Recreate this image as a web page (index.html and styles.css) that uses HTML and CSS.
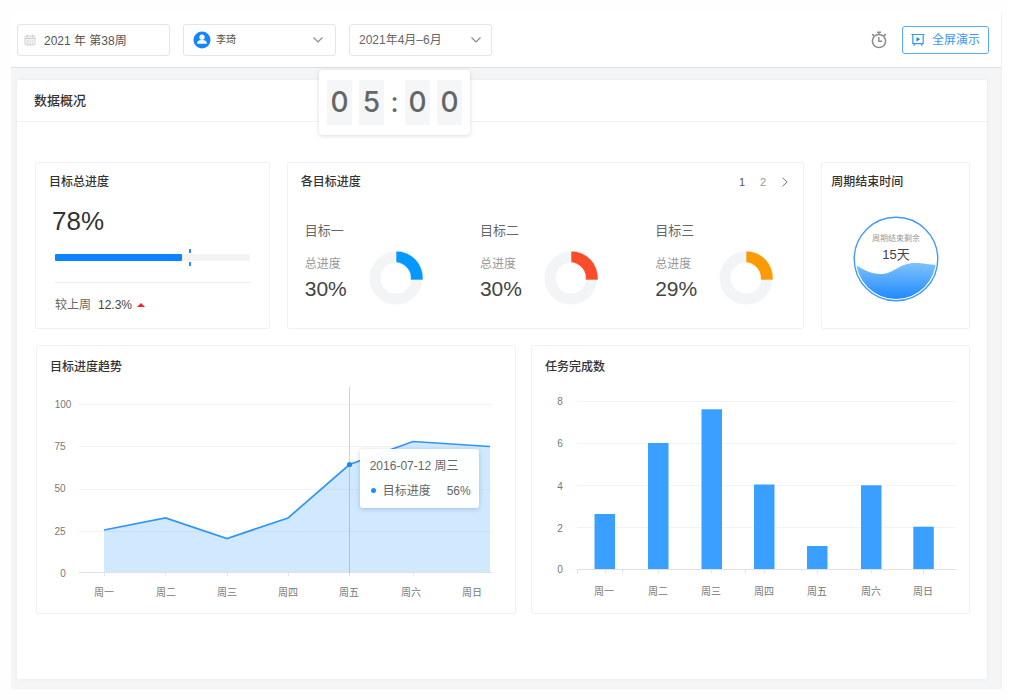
FILE: index.html
```html
<!DOCTYPE html>
<html lang="zh-CN">
<head>
<meta charset="utf-8">
<meta name="viewport" content="width=device-width, initial-scale=1">
<title>数据概况</title>
<link rel="stylesheet" href="styles.css">
</head>
<body>
<div class="app">
  <header class="toolbar">
    <label class="field field-week">
      <svg class="calendar" viewBox="0 0 12 12" width="12" height="12" fill="none" stroke="#d0d0d0" aria-hidden="true"><rect x="1" y="2" width="10" height="9" rx="1" fill="#f4f4f4"/><path d="M1 4.500h10M3.500.5v3M8.500.5v3"/><path d="M3 7h6M3 9h6" stroke-dasharray="1.500 1"/></svg>
      <input class="control" type="text" value="2021 年 第38周" aria-label="周">
    </label>
    <label class="field field-user">
      <svg viewBox="0 0 18 18" width="18" height="18" aria-hidden="true"><circle cx="9" cy="9" r="8.500" fill="#1684fc"/><circle cx="9" cy="6.200" r="2.600" fill="#fff"/><path d="M4.200 12.800V12c0-2 1.800-3 4.800-3s4.800 1 4.800 3v.8z" fill="#fff"/></svg>
      <select class="control" aria-label="成员"><option>李琦</option></select>
      <svg class="chevron" viewBox="0 0 12 8" width="12" height="8" aria-hidden="true"><path d="M1.500 1.500 6 6l4.500-4.500"/></svg>
    </label>
    <label class="field field-period">
      <select class="control" aria-label="周期"><option>2021年4月–6月</option></select>
      <svg class="chevron" viewBox="0 0 12 8" width="12" height="8" aria-hidden="true"><path d="M1.500 1.500 6 6l4.500-4.500"/></svg>
    </label>
    <div class="actions">
      <button class="timer-toggle" type="button" aria-label="计时器">
        <svg viewBox="0 0 18 18" width="18" height="18" fill="none" stroke="#8c8c8c" aria-hidden="true"><circle cx="9" cy="10" r="6.600" stroke-width="1.500"/><path d="M7 1.200h4M9 1.200v2.400M8.800 6v4.300h3.400" stroke-width="1.400"/><path d="M2.300 3.200 4 4.800M15.700 3.200 14 4.800" stroke-width="1.800"/></svg>
      </button>
      <button class="present" type="button">
        <svg viewBox="0 0 14 14" width="14" height="14" fill="none" stroke="#3b97f8" stroke-width="1.200" aria-hidden="true"><path d="M.5 1.500h13M1.800 1.500v9.200h10.400V1.500M4 10.700l-1.200 2M10 10.700l1.200 2"/><path d="M5.500 4v4.400L9.200 6.200z" fill="#1684fc" stroke="none"/></svg>
        <span>全屏演示</span>
      </button>
    </div>
    <div class="countdown" role="timer">
      <span class="digit">0</span><span class="digit">5</span><span class="colon">:</span><span class="digit">0</span><span class="digit">0</span>
    </div>
  </header>

  <main class="content">
    <section class="panel">
      <h1 class="panel-title">数据概况</h1>
      <div class="panel-body">
        <div class="row row-summary">
          <article class="card">
            <h2 class="card-title">目标总进度</h2>
            <div class="total">78%</div>
            <div class="overall">
              <div class="track"><div class="fill" style="width:65%"></div><span class="mark"></span></div>
              <p class="compare"><span>较上周</span><span class="delta">12.3%</span><span class="up"></span></p>
            </div>
          </article>

          <article class="card">
            <div class="card-head">
              <h2 class="card-title">各目标进度</h2>
              <nav class="pager" aria-label="分页">
                <a class="page current" href="#1">1</a>
                <a class="page" href="#2">2</a>
                <a class="page" href="#next" aria-label="下一页"><svg viewBox="0 0 8 10" width="8" height="10" fill="none" stroke="#777"><path d="m1.500.8 4.700 4.200-4.700 4.200"/></svg></a>
              </nav>
            </div>
            <div class="goals">
              <section class="goal">
                <h3 class="goal-name">目标一</h3>
                <div class="goal-data">
                  <div><div class="goal-label">总进度</div><div class="goal-value">30%</div></div>
                  <svg class="donut" viewBox="0 0 54 54" aria-hidden="true"><circle class="ring" cx="27" cy="27" r="21"/><path class="slice" fill="#0698ff" d="M27 0a27 27 0 0 1 27 29H41.500A15.500 15.500 0 0 0 27 11.500z"/></svg>
                </div>
              </section>
              <section class="goal">
                <h3 class="goal-name">目标二</h3>
                <div class="goal-data">
                  <div><div class="goal-label">总进度</div><div class="goal-value">30%</div></div>
                  <svg class="donut" viewBox="0 0 54 54" aria-hidden="true"><circle class="ring" cx="27" cy="27" r="21"/><path class="slice" fill="#fa4b2a" d="M27 0a27 27 0 0 1 27 29H41.500A15.500 15.500 0 0 0 27 11.500z"/></svg>
                </div>
              </section>
              <section class="goal">
                <h3 class="goal-name">目标三</h3>
                <div class="goal-data">
                  <div><div class="goal-label">总进度</div><div class="goal-value">29%</div></div>
                  <svg class="donut" viewBox="0 0 54 54" aria-hidden="true"><circle class="ring" cx="27" cy="27" r="21"/><path class="slice" fill="#fa9b06" d="M27 0a27 27 0 0 1 27 29H41.500A15.500 15.500 0 0 0 27 11.500z"/></svg>
                </div>
              </section>
            </div>
          </article>

          <article class="card card-deadline">
            <h2 class="card-title">周期结束时间</h2>
            <svg class="liquid" viewBox="0 0 86 86">
              <defs>
                <linearGradient id="water" x1="0" y1="0" x2="0" y2="1"><stop offset="0" stop-color="#80c2fc"/><stop offset="1" stop-color="#1a86fe"/></linearGradient>
                <clipPath id="bowl"><circle cx="43" cy="43" r="40"/></clipPath>
              </defs>
              <circle cx="43" cy="43" r="41.800" fill="#fff" stroke="#3f9bf8" stroke-width="1.400"/>
              <path clip-path="url(#bowl)" fill="url(#water)" d="M2 49c9 4 14 9 26 9 13 0 18-11 34-11 9 0 15 2 22 2v36H2z"/>
              <text class="liquid-label" x="43" y="25">周期结束剩余</text>
              <text class="liquid-value" x="43" y="43">15天</text>
            </svg>
          </article>
        </div>

        <div class="row row-charts">
          <article class="card">
            <h2 class="card-title">目标进度趋势</h2>
            <div class="plot">
              <svg class="chart" viewBox="37 378 478 235" role="img" aria-label="目标进度趋势">
                <defs><clipPath id="under"><path d="M104 530 165.500 518 227 538.500 288 518 349.500 464.500 413 441.500 490 446.500V572H104z"/></clipPath></defs>
                <path class="grid" d="M79 404.500H492M79 446.500H492M79 489.500H492M79 531.500H492"/>
                <path fill="#d0e9ff" d="M104 530 165.500 518 227 538.500 288 518 349.500 464.500 413 441.500 490 446.500V572H104z"/>
                <path d="M104 489.500H490M104 531.500H490" stroke="#b9d3e9" stroke-opacity=".35" clip-path="url(#under)"/>
                <path class="axis" d="M79 572.500H492M104.500 573v3M165.500 573v3M227.500 573v3M288.500 573v3M349.500 573v3M413.500 573v3"/>
                <path d="M349.500 387V573" stroke="#6e7f91" stroke-opacity=".35"/>
                <path fill="none" stroke="#2f96f5" stroke-width="1.700" d="M104 530 165.500 518 227 538.500 288 518 349.500 464.500 413 441.500 490 446.500"/>
                <circle cx="349.500" cy="464.500" r="2.600" fill="#1d88f5"/>
                <g class="tick">
                  <text x="63" y="408">100</text><text x="60" y="450">75</text><text x="60" y="492">50</text><text x="60" y="535">25</text><text x="63" y="577">0</text>
                  <text x="104" y="596">周一</text><text x="166" y="596">周二</text><text x="227" y="596">周三</text><text x="288" y="596">周四</text><text x="349" y="596">周五</text><text x="411" y="596">周六</text><text x="472" y="596">周日</text>
                </g>
              </svg>
              <div class="tooltip" role="tooltip">
                <div>2016-07-12 周三</div>
                <div class="tooltip-row"><span class="dot"></span><span>目标进度</span><span class="tooltip-value">56%</span></div>
              </div>
            </div>
          </article>

          <article class="card">
            <h2 class="card-title">任务完成数</h2>
            <svg class="chart" viewBox="532 378 437 235" role="img" aria-label="任务完成数">
              <path class="grid" d="M577 401.500H956M577 443.500H956M577 485.500H956M577 527.500H956"/>
              <g fill="#3aa0ff">
                <rect x="594.500" y="514" width="20.500" height="55.500"/>
                <rect x="648" y="443" width="20.500" height="126.500"/>
                <rect x="701.500" y="409.300" width="20.500" height="160.200"/>
                <rect x="754" y="484.500" width="20.500" height="85"/>
                <rect x="807" y="546" width="20.500" height="23.500"/>
                <rect x="861" y="485.300" width="20.500" height="84.200"/>
                <rect x="913.300" y="526.700" width="20.500" height="42.800"/>
              </g>
              <path class="axis" d="M577 569.500H956M577.500 570v4M605.500 570v3M622.500 570v3M658.500 570v3M711.500 570v3M745.500 570v3M764.500 570v3M817.500 570v3M871.500 570v3M923.500 570v4"/>
              <g class="tick">
                <text x="560" y="405">8</text><text x="560" y="447">6</text><text x="560" y="490">4</text><text x="560" y="532">2</text><text x="560" y="573">0</text>
                <text x="604" y="595">周一</text><text x="658" y="595">周二</text><text x="711" y="595">周三</text><text x="764" y="595">周四</text><text x="817" y="595">周五</text><text x="871" y="595">周六</text><text x="923" y="595">周日</text>
              </g>
            </svg>
          </article>
        </div>
      </div>
    </section>
  </main>
</div>
</body>
</html>
```
FILE: styles.css
```css
* { box-sizing: border-box; }
body {
  margin: 0;
  padding: 13px 7px 11px 11px;
  background: #fefefe;
  color: #333;
  font: 12px/18px "Liberation Sans", "Noto Sans CJK SC", sans-serif;
}
h1, h2, h3, p { margin: 0; }
button, input, select { font: inherit; color: inherit; }
a { color: inherit; text-decoration: none; }
svg { display: block; flex: none; }

.app { border-right: 1px solid #eef0f1; }

.toolbar {
  position: relative;
  display: flex;
  align-items: center;
  gap: 13px;
  min-height: 55px;
  padding: 0 12px 0 6px;
  background: #fff;
  border-bottom: 1px solid #dcdfe0;
}
.field {
  display: flex;
  align-items: center;
  height: 32px;
  border: 1px solid #e5e5e5;
  border-radius: 3px;
  background: #fff;
  color: #555;
}
.field-week { width: 153px; padding: 0 7px 1px 6px; gap: 8px; }
.field-user { width: 153px; padding: 0 11px 0 9px; gap: 5px; }
.field-period { width: 143px; padding: 0 9px; color: #666; }
.control {
  flex: 1;
  min-width: 0;
  height: 100%;
  padding: 0;
  border: 0;
  outline: 0;
  background: none;
  appearance: none;
}
.field-user .control { font-size: 10px; }
.chevron { pointer-events: none; fill: none; stroke: #8a8a8a; stroke-width: 1.2; }
.actions { display: flex; align-items: center; gap: 14px; margin-left: auto; }
.timer-toggle { padding: 0; border: 0; background: none; }
.present {
  display: flex;
  align-items: center;
  justify-content: center;
  gap: 7px;
  height: 28px;
  padding: 0 8px;
  border: 1px solid #58a8fb;
  border-radius: 3px;
  background: #fff;
  color: #3b97f8;
}
.countdown {
  position: absolute;
  top: 57px;
  left: 308px;
  z-index: 2;
  display: flex;
  gap: 7px;
  padding: 10px 8px;
  border-radius: 4px;
  background: #fff;
  box-shadow: 0 1px 4px rgba(0, 0, 0, .14);
  color: #666;
  font: 500 28px/45px Inter, sans-serif;
  text-align: center;
}
.digit { width: 25px; background: #f4f6f8; }
.colon { width: 7px; display: flex; justify-content: center; font-weight: 400; }

.content { padding: 12px 14px 10px 6px; background: #f3f5f7; }
.panel {
  min-height: 599px;
  border-radius: 3px;
  background: #fff;
  box-shadow: 0 0 4px rgba(0, 0, 0, .06);
}
.panel-title {
  padding: 10px 17px;
  border-bottom: 1px solid #f0f1f2;
  font-size: 13px;
  font-weight: 500;
  line-height: 21px;
}
.panel-body { padding: 40px 17px 39px 18px; }
.row { display: grid; }
.row-summary { grid-template-columns: 235fr 518fr 149fr; gap: 17px; }
.row-charts { grid-template-columns: 480fr 439fr; gap: 15px; margin-top: 16px; padding-left: 1px; }
.card {
  min-width: 0;
  border: 1px solid #f0f1f2;
  border-radius: 2px;
  background: #fff;
}
.card-title { padding: 10px 13px 0; font-size: 12px; font-weight: 500; }
.row-charts .card-title { padding: 12px 13px 2px; }

.total { padding: 12px 16px 0; font-size: 26px; line-height: 36px; }
.overall { padding: 15px 19px 14px; }
.track { position: relative; height: 7px; border-radius: 1px; background: #f2f3f5; }
.fill { height: 100%; border-radius: 1px; background: #0d84ff; }
.mark {
  position: absolute;
  left: 69%;
  top: -5px;
  width: 2px;
  height: 17px;
  border: solid #2a8cff;
  border-width: 4px 0;
}
.compare {
  display: flex;
  align-items: center;
  margin-top: 21px;
  padding-top: 13px;
  border-top: 1px solid #ececec;
  color: #666;
}
.delta { margin-left: 7px; color: #444; }
.up { margin-left: 5px; border: solid transparent; border-width: 0 4px 4px; border-bottom-color: #f5222d; }

.card-head { display: flex; justify-content: space-between; }
.pager { display: flex; align-items: center; gap: 15px; padding: 10px 14px 0 0; color: #999; font-size: 11px; }
.current { color: #555; }
.goals { display: flex; justify-content: space-between; padding: 30px 30px 20px 17px; }
.goal { width: 118px; }
.goal-name { color: #666; font-size: 13px; font-weight: 400; line-height: 20px; }
.goal-data { display: flex; justify-content: space-between; margin-top: 10px; }
.goal-label { margin-top: 4px; color: #999; }
.goal-value { color: #444; font-size: 21px; line-height: 32px; }
.donut { width: 54px; height: 54px; }
.ring { fill: none; stroke: #f2f4f6; stroke-width: 11; }
.slice { stroke: #fff; stroke-width: .6; }

.card-deadline .card-title { padding-left: 9px; }
.liquid { width: 86px; height: 86px; margin: 25px auto 0; }
.liquid-label { fill: #999; font-size: 8px; text-anchor: middle; }
.liquid-value { fill: #444; font-size: 13px; text-anchor: middle; }

.plot { position: relative; }
.chart { width: 100%; height: auto; }
.grid { fill: none; stroke: #f3f3f3; }
.axis { fill: none; stroke: #dfe1e3; }
.tick { fill: #777; font-size: 10px; text-anchor: middle; }
.tooltip {
  position: absolute;
  left: 65%;
  top: 30%;
  width: 119px;
  margin-left: 12px;
  padding: 8px 8px 8px 10px;
  border-radius: 3px;
  background: rgba(255, 255, 255, .96);
  box-shadow: 0 1px 5px rgba(0, 40, 80, .22);
  color: #666;
  white-space: nowrap;
}
.tooltip-row { display: flex; align-items: center; margin-top: 7px; }
.dot { width: 5px; height: 5px; margin: 0 7px 0 1px; border-radius: 50%; background: #1d8ff5; }
.tooltip-value { margin-left: auto; }
```
